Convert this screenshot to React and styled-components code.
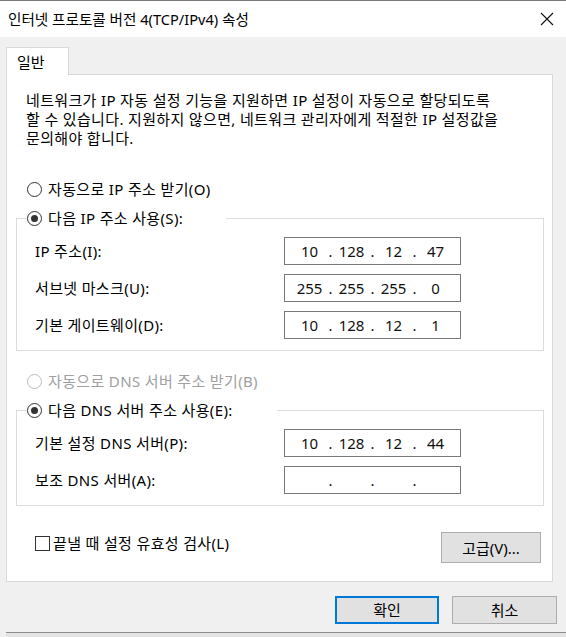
import React from "react";
import styled, { createGlobalStyle } from "styled-components";

const GlobalStyle = createGlobalStyle`
  html, body {
    margin: 0;
    padding: 0;
    background: #f0f0f0;
  }
  body {
    font-family: "Noto Sans", "Noto Sans CJK KR", sans-serif;
    font-size: 15px;
    color: #000;
  }
`;

const Window = styled.div`
  width: 566px;
  height: 637px;
  box-sizing: border-box;
  display: flex;
  flex-direction: column;
  background: #f0f0f0;
  border-top: 1px solid #7b7b7b;
  overflow: hidden;
`;

const TitleBar = styled.div`
  height: 36px;
  flex: none;
  display: flex;
  align-items: center;
  justify-content: space-between;
  padding: 0 12px 0 8px;
  background: #fff;
`;

const Title = styled.span`
  font-size: 14.6px;
  line-height: 20px;
`;

const Body = styled.div`
  flex: 1;
  display: flex;
  flex-direction: column;
  padding: 10px 0 0 6px;
`;

const Tab = styled.div`
  width: 63px;
  height: 28px;
  box-sizing: border-box;
  padding: 4px 0 0 10px;
  background: #fff;
  border: 1px solid #d9d9d9;
  border-bottom: none;
  line-height: 20px;
  position: relative;
  z-index: 1;
`;

const Panel = styled.div`
  width: 547px;
  height: 508px;
  box-sizing: border-box;
  background: #fff;
  border: 1px solid #d9d9d9;
  margin-top: -1px;
  padding: 16px 0 0 0;
  display: flex;
  flex-direction: column;
  letter-spacing: 0.35px;
`;

const Description = styled.p`
  margin: 0 0 31px 19px;
  line-height: 19px;
  white-space: nowrap;
`;

const RadioRow = styled.label`
  display: flex;
  align-items: center;
  height: 20px;
  line-height: 20px;
  gap: 6px;
  color: ${p => (p.disabled ? "#a0a0a0" : "#000")};
  background: #fff;
`;

const Circle = styled.span`
  width: 15px;
  height: 15px;
  box-sizing: border-box;
  border-radius: 50%;
  border: 1px solid ${p => (p.disabled ? "#bcbcbc" : "#333")};
  display: flex;
  align-items: center;
  justify-content: center;
  flex: none;
  &::after {
    content: "";
    width: 7px;
    height: 7px;
    border-radius: 50%;
    background: #333;
    display: ${p => (p.checked ? "block" : "none")};
  }
`;

const StandaloneRadio = styled.div`
  margin: ${p => p.top}px 0 9px 20px;
`;

const GroupBox = styled.fieldset`
  margin: 0 8px 0 9px;
  padding: 0;
  border: 1px solid #dcdcdc;
  min-width: 0;
`;

const Legend = styled.legend`
  margin-left: 10px;
  padding: 0;
  width: ${p => p.width}px;
`;

const Rows = styled.div`
  display: grid;
  grid-template-columns: 249px 177px;
  row-gap: 9px;
  align-items: center;
  padding: 9px 0 11px 18px;
`;

const FieldLabel = styled.span`
  line-height: 20px;
`;

const IpBox = styled.div`
  height: 28px;
  box-sizing: border-box;
  border: 1px solid #7a7a7a;
  background: #fff;
  display: grid;
  grid-template-columns: 34px 8px 34px 8px 34px 8px 34px;
  justify-content: center;
  align-items: center;
  color: #111;
  line-height: 20px;
  letter-spacing: 0;
`;

const Cell = styled.span`
  text-align: center;
`;

const Footer = styled.div`
  display: flex;
  align-items: flex-start;
  justify-content: space-between;
  margin-top: 26px;
  padding: 0 11px 0 28px;
`;

const CheckRow = styled.label`
  display: flex;
  align-items: center;
  gap: 3px;
  height: 20px;
  line-height: 20px;
  margin-top: 1px;
`;

const CheckBox = styled.span`
  width: 15px;
  height: 15px;
  box-sizing: border-box;
  border: 1px solid #333;
  background: #fff;
`;

const Button = styled.button`
  width: ${p => p.w}px;
  height: ${p => p.h}px;
  box-sizing: border-box;
  background: #e1e1e1;
  border: ${p => (p.primary ? "2px solid #0078d7" : "1px solid #adadad")};
  font-family: inherit;
  font-size: 15px;
  color: #000;
  padding: 0;
  line-height: 20px;
  letter-spacing: 0;
`;

const ButtonBar = styled.div`
  display: flex;
  justify-content: flex-end;
  gap: 13px;
  margin-top: 14px;
  padding-right: 9px;
`;

const BottomEdge = styled.div`
  margin-top: auto;
  height: 4px;
  border-top: 1px solid #8e8e8e;
  background: #e4e4e4;
`;

const CloseIcon = () => (
  <svg width="14" height="14" viewBox="0 0 14 14">
    <path d="M1 1L13 13M13 1L1 13" stroke="#111" strokeWidth="1.1" fill="none" />
  </svg>
);

const Radio = ({ checked, disabled, children }) => (
  <RadioRow disabled={disabled}>
    <Circle checked={checked} disabled={disabled} />
    {children}
  </RadioRow>
);

const IpField = ({ value }) => {
  const parts = value ? value.split(".") : ["", "", "", ""];
  return (
    <IpBox>
      {parts.map((p, i) => (
        <React.Fragment key={i}>
          {i > 0 && <Cell>.</Cell>}
          <Cell>{p}</Cell>
        </React.Fragment>
      ))}
    </IpBox>
  );
};

const ipRows = [
  ["IP 주소(I):", "10.128.12.47"],
  ["서브넷 마스크(U):", "255.255.255.0"],
  ["기본 게이트웨이(D):", "10.128.12.1"],
];

const dnsRows = [
  ["기본 설정 DNS 서버(P):", "10.128.12.44"],
  ["보조 DNS 서버(A):", ""],
];

const FieldRows = ({ rows }) => (
  <Rows>
    {rows.map(([label, value]) => (
      <React.Fragment key={label}>
        <FieldLabel>{label}</FieldLabel>
        <IpField value={value} />
      </React.Fragment>
    ))}
  </Rows>
);

export default function App() {
  return (
    <>
      <GlobalStyle />
      <Window>
        <TitleBar>
          <Title>인터넷 프로토콜 버전 4(TCP/IPv4) 속성</Title>
          <CloseIcon />
        </TitleBar>
        <Body>
          <Tab>일반</Tab>
          <Panel>
            <Description>
              네트워크가 IP 자동 설정 기능을 지원하면 IP 설정이 자동으로 할당되도록
              <br />
              할 수 있습니다. 지원하지 않으면, 네트워크 관리자에게 적절한 IP 설정값을
              <br />
              문의해야 합니다.
            </Description>
            <StandaloneRadio top={0}>
              <Radio>자동으로 IP 주소 받기(O)</Radio>
            </StandaloneRadio>
            <GroupBox>
              <Legend width={199}>
                <Radio checked>다음 IP 주소 사용(S):</Radio>
              </Legend>
              <FieldRows rows={ipRows} />
            </GroupBox>
            <StandaloneRadio top={20}>
              <Radio disabled>자동으로 DNS 서버 주소 받기(B)</Radio>
            </StandaloneRadio>
            <GroupBox>
              <Legend width={250}>
                <Radio checked>다음 DNS 서버 주소 사용(E):</Radio>
              </Legend>
              <FieldRows rows={dnsRows} />
            </GroupBox>
            <Footer>
              <CheckRow>
                <CheckBox />
                끝낼 때 설정 유효성 검사(L)
              </CheckRow>
              <Button w={100} h={31}>고급(V)...</Button>
            </Footer>
          </Panel>
          <ButtonBar>
            <Button primary w={104} h={28}>확인</Button>
            <Button w={105} h={28}>취소</Button>
          </ButtonBar>
          <BottomEdge />
        </Body>
      </Window>
    </>
  );
}
